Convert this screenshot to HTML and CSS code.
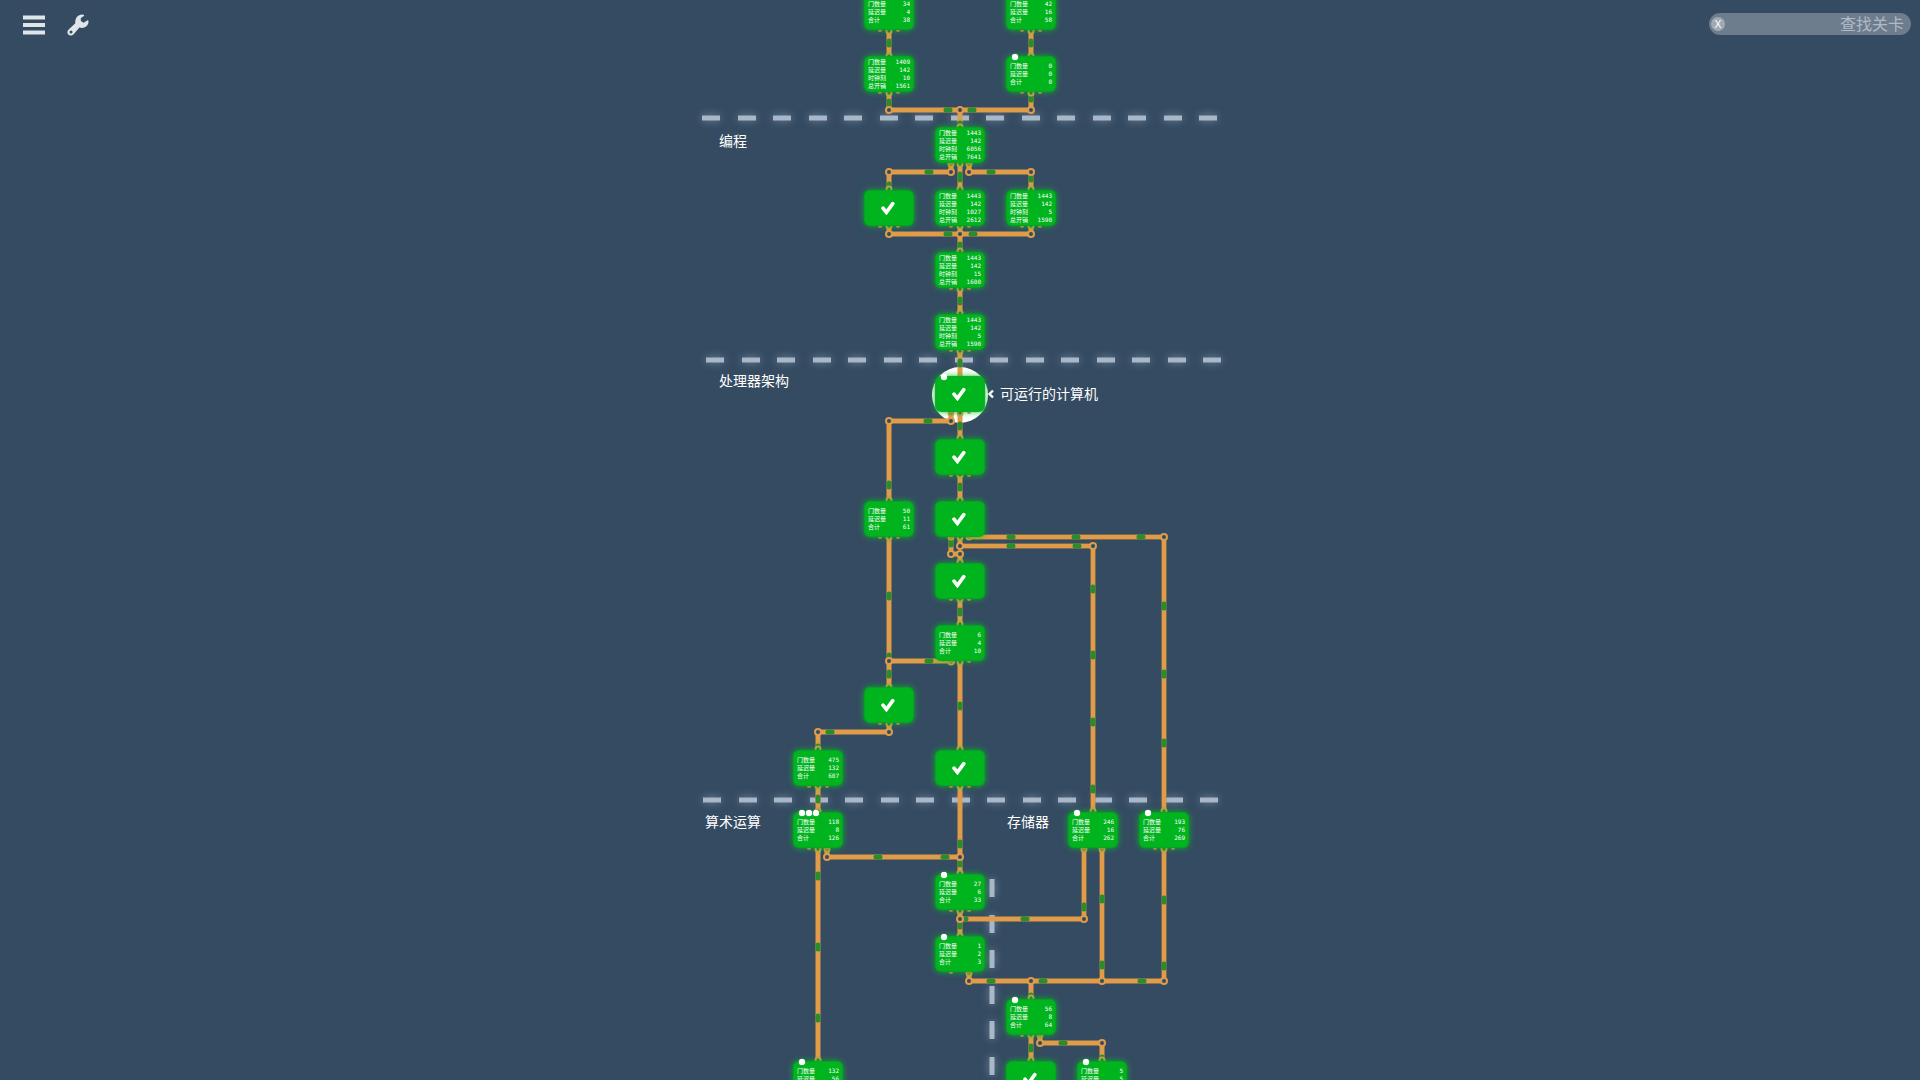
FILE: index.html
```html
<!DOCTYPE html>
<html lang="zh-CN">
<head>
<meta charset="utf-8">
<title>关卡地图</title>
<link rel="stylesheet" href="styles.css">
</head>
<body>
<svg class="defs" width="0" height="0" aria-hidden="true">
  <symbol id="check" viewBox="0 0 14 14"><path d="M2 7.200L5.400 11.400L11.800 2.600" fill="none" stroke="#fff" stroke-width="3.600" stroke-linecap="round" stroke-linejoin="miter"/></symbol>
</svg>

<header class="topbar">
  <nav class="tools">
    <button class="tool" type="button" aria-label="菜单">
      <svg width="22" height="22" viewBox="0 0 22 22"><path d="M0 3.500h22M0 11h22M0 18.500h22" stroke="#e0e5e8" stroke-width="3.800"/></svg>
    </button>
    <button class="tool" type="button" aria-label="设置">
      <svg width="22" height="22" viewBox="0 0 22 22"><path fill="#e0e5e8" fill-rule="evenodd" d="M15 .5c1 0 1.700.2 2 .5.300.3.200.7-.1.9L13.800 4v3l2.800 1.700 3.600-2.200c.6-.4 1.200-.1 1.300.6.3 3.600-2.600 6.900-6.400 6.900-1 0-1.900-.2-2.700-.5L6.700 20.200C5 22 2.700 22 1.300 20.600-.1 19.100.1 16.900 1.700 15.400L8.300 9.300C7.700 4.500 10.800.6 15 .5zM4 16.500a1.500 1.500 0 1 0 0 3 1.500 1.500 0 0 0 0-3z"/></svg>
    </button>
  </nav>
  <form class="search" role="search">
    <button class="clear" type="button" aria-label="清除">X</button>
    <input class="query" type="text" placeholder="查找关卡" aria-label="查找关卡">
  </form>
</header>

<main class="map">
  <svg class="wires" viewBox="680 0 560 1120" width="560" height="1120" aria-hidden="true">
    <defs>
      <path id="thick" d="M969 537H1164V830M960 546H1093V830M1084 848V919M1102 848V981M1164 848V981"/>
      <path id="joints" d="M889 110h0M960 110h0M1031 110h0M889 172h0M951 172h0M969 172h0M1031 172h0M889 234h0M960 234h0M1031 234h0M889 421h0M951 421h0M1164 537h0M960 546h0M1093 546h0M951 554h0M960 554h0M889 661h0M889 732h0M818 732h0M827 857h0M960 857h0M960 919h0M1084 919h0M969 981h0M1031 981h0M1102 981h0M1164 981h0M1040 1043h0M1102 1043h0"/>
      <path id="ports" d="M889 31h0M1031 31h0M889 56h0M1031 56h0M889 93h0M1031 93h0M960 127h0M951 164h0M960 164h0M969 164h0M889 189h0M960 189h0M1031 189h0M889 226h0M960 226h0M1031 226h0M960 251h0M960 289h0M960 313h0M960 351h0M951 413h0M960 413h0M960 438h0M960 475h0M889 500h0M960 500h0M889 537h0M951 537h0M960 537h0M969 537h0M960 562h0M960 599h0M960 624h0M951 662h0M960 662h0M889 687h0M889 724h0M818 749h0M960 749h0M818 786h0M960 786h0M818 811h0M1093 811h0M1164 811h0M818 849h0M827 849h0M1084 849h0M1102 849h0M1164 849h0M960 873h0M960 911h0M960 936h0M969 973h0M1031 998h0M1031 1035h0M1040 1035h0M818 1060h0M1031 1060h0M1102 1060h0"/>
    </defs>
    <circle class="halo" cx="960" cy="395" r="28"/>
    <g class="borders">
      <path d="M702 118H1218"/>
      <path d="M706 360H1222"/>
      <path d="M703 800H1219"/>
      <path d="M992 879V1120"/>
    </g>
    <path class="wire" d="M889 12V110H1031V12M960 110V145M960 145V400M951 160V172H889V234H1031V172H969V160M951 408V421H889V732H818V1080M960 400V537M960 537V546M951 537V554H960V950M889 661H955M827 840V857H960M960 919H1084M969 960V981H1164M1031 981V1080M1040 1030V1043H1102V1080"/>
    <use href="#thick" class="rim"/>
    <use href="#thick" class="core"/>
    <path class="pulse" d="M889 41v4M1031 41v4M889 101v4M1031 96v4M946 110h4M970 110h4M960 123v4M927 172h4M989 172h4M960 174v6M889 184v4M1031 176v4M946 234h4M971 234h4M960 244v4M960 299v4M960 361v4M926 421h4M960 424v4M889 483v4M960 485v4M889 594v4M889 655v3M889 672v4M927 661h4M1009 537h4M1074 537h4M1139 537h4M1164 604v4M1164 672v4M1164 741v4M1009 546h4M1075 546h4M1093 587v4M1093 653v4M1093 720v4M1093 787v4M951 541v4M960 610v4M960 704v4M828 732h4M818 746v3M818 797v4M960 842v4M960 862v3M876 857h4M943 857h4M818 874v4M818 945v4M818 1016v4M1084 905v4M1023 919h4M965 919h1M1102 897v4M1102 963v4M1164 898v4M1164 964v4M960 923v4M989 981h4M1041 981h4M1140 981h4M1031 995v3M1031 1046v4M1061 1043h4M1102 1057v3"/>
    <use href="#ports" class="port-ring"/>
    <use href="#ports" class="port-hole"/>
    <use href="#joints" class="joint-ring"/>
    <use href="#joints" class="joint-hole"/>
  </svg>

  <h2 class="area area-code">编程</h2>
  <h2 class="area area-cpu">处理器架构</h2>
  <h2 class="area area-math">算术运算</h2>
  <h2 class="area area-memory">存储器</h2>
  <p class="current"><svg width="6" height="10" viewBox="0 0 6 10" aria-hidden="true"><path d="M5 1.500L1.500 5L5 8.500" fill="none" stroke="#fff" stroke-width="2.400"/></svg>可运行的计算机</p>

  <button class="level c2 r1" type="button"><span class="stat">门数量<b>34</b></span><span class="stat">延迟量<b>4</b></span><span class="stat">合计<b>38</b></span></button>
  <button class="level c4 r1" type="button"><span class="stat">门数量<b>42</b></span><span class="stat">延迟量<b>16</b></span><span class="stat">合计<b>58</b></span></button>
  <button class="level c2 r2" type="button"><span class="stat">门数量<b>1409</b></span><span class="stat">延迟量<b>142</b></span><span class="stat">时钟刻<b>10</b></span><span class="stat">总开销<b>1561</b></span></button>
  <button class="level c4 r2" type="button"><span class="dots"><i></i></span><span class="stat">门数量<b>0</b></span><span class="stat">延迟量<b>0</b></span><span class="stat">合计<b>0</b></span></button>
  <button class="level c3 r3" type="button"><span class="stat">门数量<b>1443</b></span><span class="stat">延迟量<b>142</b></span><span class="stat">时钟刻<b>6056</b></span><span class="stat">总开销<b>7641</b></span></button>
  <button class="level c2 r4" type="button" aria-label="已完成"><svg class="check"><use href="#check"/></svg></button>
  <button class="level c3 r4" type="button"><span class="stat">门数量<b>1443</b></span><span class="stat">延迟量<b>142</b></span><span class="stat">时钟刻<b>1027</b></span><span class="stat">总开销<b>2612</b></span></button>
  <button class="level c4 r4" type="button"><span class="stat">门数量<b>1443</b></span><span class="stat">延迟量<b>142</b></span><span class="stat">时钟刻<b>5</b></span><span class="stat">总开销<b>1590</b></span></button>
  <button class="level c3 r5" type="button"><span class="stat">门数量<b>1443</b></span><span class="stat">延迟量<b>142</b></span><span class="stat">时钟刻<b>15</b></span><span class="stat">总开销<b>1600</b></span></button>
  <button class="level c3 r6" type="button"><span class="stat">门数量<b>1443</b></span><span class="stat">延迟量<b>142</b></span><span class="stat">时钟刻<b>5</b></span><span class="stat">总开销<b>1590</b></span></button>
  <button class="level c3 r7" type="button" aria-label="可运行的计算机"><span class="dots"><i></i></span><svg class="check"><use href="#check"/></svg></button>
  <button class="level c3 r8" type="button" aria-label="已完成"><svg class="check"><use href="#check"/></svg></button>
  <button class="level c2 r9" type="button"><span class="stat">门数量<b>50</b></span><span class="stat">延迟量<b>11</b></span><span class="stat">合计<b>61</b></span></button>
  <button class="level c3 r9" type="button" aria-label="已完成"><svg class="check"><use href="#check"/></svg></button>
  <button class="level c3 r10" type="button" aria-label="已完成"><svg class="check"><use href="#check"/></svg></button>
  <button class="level c3 r11" type="button"><span class="stat">门数量<b>6</b></span><span class="stat">延迟量<b>4</b></span><span class="stat">合计<b>10</b></span></button>
  <button class="level c2 r12" type="button" aria-label="已完成"><svg class="check"><use href="#check"/></svg></button>
  <button class="level c1 r13" type="button"><span class="stat">门数量<b>475</b></span><span class="stat">延迟量<b>132</b></span><span class="stat">合计<b>607</b></span></button>
  <button class="level c3 r13" type="button" aria-label="已完成"><svg class="check"><use href="#check"/></svg></button>
  <button class="level c1 r14" type="button"><span class="dots"><i></i><i></i><i></i></span><span class="stat">门数量<b>118</b></span><span class="stat">延迟量<b>8</b></span><span class="stat">合计<b>126</b></span></button>
  <button class="level c5 r14" type="button"><span class="dots"><i></i></span><span class="stat">门数量<b>246</b></span><span class="stat">延迟量<b>16</b></span><span class="stat">合计<b>262</b></span></button>
  <button class="level c7 r14" type="button"><span class="dots"><i></i></span><span class="stat">门数量<b>193</b></span><span class="stat">延迟量<b>76</b></span><span class="stat">合计<b>269</b></span></button>
  <button class="level c3 r15" type="button"><span class="dots"><i></i></span><span class="stat">门数量<b>27</b></span><span class="stat">延迟量<b>6</b></span><span class="stat">合计<b>33</b></span></button>
  <button class="level c3 r16" type="button"><span class="dots"><i></i></span><span class="stat">门数量<b>1</b></span><span class="stat">延迟量<b>2</b></span><span class="stat">合计<b>3</b></span></button>
  <button class="level c4 r17" type="button"><span class="dots"><i></i></span><span class="stat">门数量<b>56</b></span><span class="stat">延迟量<b>8</b></span><span class="stat">合计<b>64</b></span></button>
  <button class="level c1 r18" type="button"><span class="dots"><i></i></span><span class="stat">门数量<b>132</b></span><span class="stat">延迟量<b>56</b></span><span class="stat">合计<b>188</b></span></button>
  <button class="level c4 r18" type="button" aria-label="已完成"><svg class="check"><use href="#check"/></svg></button>
  <button class="level c6 r18" type="button"><span class="dots"><i></i></span><span class="stat">门数量<b>5</b></span><span class="stat">延迟量<b>5</b></span><span class="stat">合计<b>10</b></span></button>
</main>
</body>
</html>
```

FILE: styles.css
```css
* { box-sizing: border-box; }

body {
  margin: 0;
  height: 100vh;
  overflow: hidden;
  background: #344b62;
  color: #fff;
  font-family: "Noto Sans", "Noto Sans CJK SC", sans-serif;
}

button {
  margin: 0;
  padding: 0;
  border: 0;
  background: none;
  color: inherit;
  font-family: inherit;
  cursor: pointer;
}

.defs { position: absolute; }

/* Top bar, floating over the map */
.topbar {
  position: absolute;
  inset: 0 0 auto 0;
  z-index: 2;
  display: flex;
  justify-content: space-between;
  align-items: flex-start;
  padding: 13px 9px 0 23px;
  pointer-events: none;
}

.topbar > * { pointer-events: auto; }

.tools { display: flex; gap: 22px; padding-top: 1px; }

.tool, .tool svg { display: block; }

.search {
  display: flex;
  align-items: center;
  width: 202px;
  height: 22px;
  padding: 0 7px 0 2px;
  border-radius: 11px;
  background: #6d7d8e;
}

.clear {
  flex: none;
  width: 14px;
  height: 14px;
  border-radius: 50%;
  background: #a0aab4;
  font-size: 11px;
  line-height: 14px;
}

.query {
  flex: 1;
  min-width: 0;
  padding: 0;
  border: 0;
  outline: 0;
  background: none;
  color: #fff;
  font-family: inherit;
  font-size: 16px;
  line-height: 22px;
  text-align: right;
}

.query::placeholder { color: #b0bac5; opacity: 1; }

/* Map canvas */
.map {
  position: relative;
  width: 560px;
  height: 1120px;
  margin: 0 auto;
}

.wires { position: absolute; inset: 0; fill: none; }

.halo { fill: #fff; }

.borders {
  stroke: #a9b8c8;
  stroke-width: 5;
  stroke-dasharray: 18 18 18 17;
  filter: drop-shadow(0 0 4px rgba(190, 205, 220, .5));
}

.wire { stroke: #e09c48; stroke-width: 5; }
.rim { stroke: #c08540; stroke-width: 5; }
.core { stroke: #e09c48; stroke-width: 4; }
.pulse { stroke: #2a8c2c; stroke-width: 5; stroke-linecap: round; }

.port-ring, .port-hole, .joint-ring, .joint-hole { stroke-linecap: round; }
.port-ring { stroke: #d29d48; stroke-width: 7; }
.port-hole { stroke: #2f6b45; stroke-width: 3; }
.joint-ring { stroke: #e09c48; stroke-width: 8; }
.joint-hole { stroke: #344b62; stroke-width: 4; }

/* Area names */
.area, .current {
  position: absolute;
  margin: 0;
  font-size: 14px;
  font-weight: 400;
  line-height: 20px;
  white-space: nowrap;
}

.area-code { left: 39px; top: 131px; }
.area-cpu { left: 39px; top: 371px; }
.area-math { left: 25px; top: 812px; }
.area-memory { left: 327px; top: 812px; }

.current {
  left: 308px;
  top: 384px;
  display: flex;
  align-items: center;
  gap: 6px;
}

/* Level cards */
.level {
  position: absolute;
  display: flex;
  flex-direction: column;
  justify-content: center;
  width: 48px;
  height: 34px;
  padding: 0 3px;
  border-radius: 5px;
  background: #00b41e;
  box-shadow: 0 0 1px 1px #08a522, 0 0 6px 1px rgba(0, 200, 30, .8);
  font-size: 6px;
  line-height: 8px;
}

.level::after {
  content: "";
  position: absolute;
  left: 13px;
  top: 35px;
  width: 4px;
  height: 2px;
  border-radius: 0 0 2px 2px;
  background: #a58c46;
  box-shadow: 18px 0 #a58c46;
}

.stat {
  display: flex;
  justify-content: space-between;
  height: 8px;
  white-space: nowrap;
}

.stat b {
  font-family: "DejaVu Sans Mono", monospace;
  font-weight: 400;
}

.check { align-self: center; width: 14px; height: 14px; margin-right: 2px; }

.dots {
  position: absolute;
  left: 5px;
  top: -3px;
  display: flex;
  gap: 1px;
}

.dots i {
  width: 6px;
  height: 6px;
  border-radius: 50%;
  background: #fff;
  box-shadow: 0 0 1px #fff;
}

/* Map columns */
.c1 { left: 114px; }
.c2 { left: 185px; }
.c3 { left: 256px; }
.c4 { left: 327px; }
.c5 { left: 389px; }
.c6 { left: 398px; }
.c7 { left: 460px; }

/* Map rows */
.r1 { top: -5px; }
.r2 { top: 57px; }
.r3 { top: 128px; }
.r4 { top: 191px; }
.r5 { top: 253px; }
.r6 { top: 315px; }
.r7 { top: 377px; }
.r8 { top: 440px; }
.r9 { top: 502px; }
.r10 { top: 564px; }
.r11 { top: 626px; }
.r12 { top: 688px; }
.r13 { top: 751px; }
.r14 { top: 813px; }
.r15 { top: 875px; }
.r16 { top: 937px; }
.r17 { top: 1000px; }
.r18 { top: 1062px; }
```
